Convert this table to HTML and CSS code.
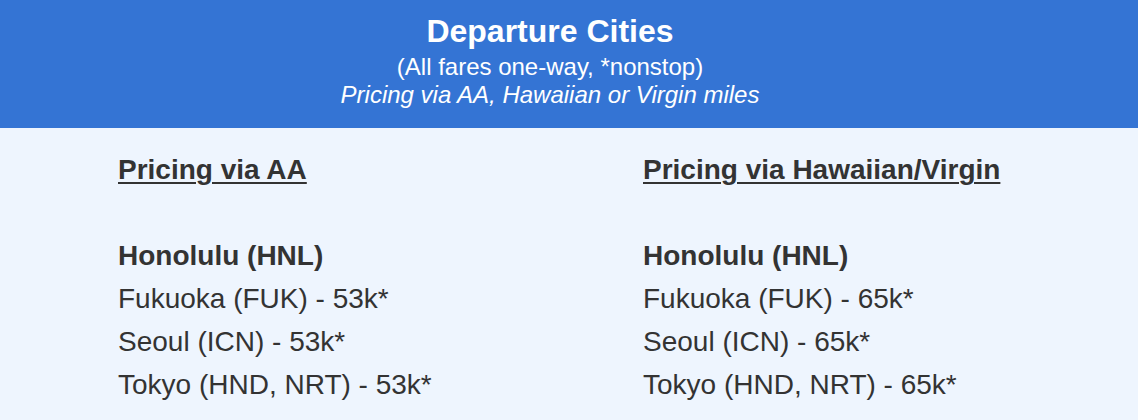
FILE: index.html
```html
<!DOCTYPE html>
<html>
<head>
<meta charset="utf-8">
<link rel="stylesheet" href="styles.css">
</head>
<body>
<header class="banner">
  <div class="title">Departure Cities</div>
  <div class="sub">(All fares one-way, *nonstop)</div>
  <div class="sub italic">Pricing via AA, Hawaiian or Virgin miles</div>
</header>
<main class="cols">
  <section class="col">
    <div class="line heading">Pricing via AA</div>
    <div class="line blank"></div>
    <div class="line city">Honolulu (HNL)</div>
    <div class="line">Fukuoka (FUK) - 53k*</div>
    <div class="line">Seoul (ICN) - 53k*</div>
    <div class="line">Tokyo (HND, NRT) - 53k*</div>
  </section>
  <section class="col">
    <div class="line heading">Pricing via Hawaiian/Virgin</div>
    <div class="line blank"></div>
    <div class="line city">Honolulu (HNL)</div>
    <div class="line">Fukuoka (FUK) - 65k*</div>
    <div class="line">Seoul (ICN) - 65k*</div>
    <div class="line">Tokyo (HND, NRT) - 65k*</div>
  </section>
</main>
</body>
</html>
```
FILE: styles.css
```css
html, body {
  margin: 0;
  padding: 0;
}
body {
  background: #eef5fe;
  font-family: "Liberation Sans", Arial, Helvetica, sans-serif;
  color: #333333;
  height: 420px;
  overflow: hidden;
}
.banner {
  background: #3474d4;
  color: #ffffff;
  text-align: center;
  padding: 9px 38px 19px 0;
}
.title {
  font-size: 32px;
  font-weight: bold;
  line-height: 44px;
}
.sub {
  font-size: 24px;
  line-height: 28px;
}
.italic {
  font-style: italic;
}
.cols {
  display: grid;
  grid-template-columns: 525px auto;
  padding: 20px 0 0 118px;
}
.line {
  font-size: 28px;
  line-height: 43px;
  height: 43px;
  white-space: nowrap;
}
.heading {
  font-weight: bold;
  text-decoration: underline;
  text-underline-offset: 3px;
  text-decoration-thickness: 2px;
}
.city {
  font-weight: bold;
}
```
